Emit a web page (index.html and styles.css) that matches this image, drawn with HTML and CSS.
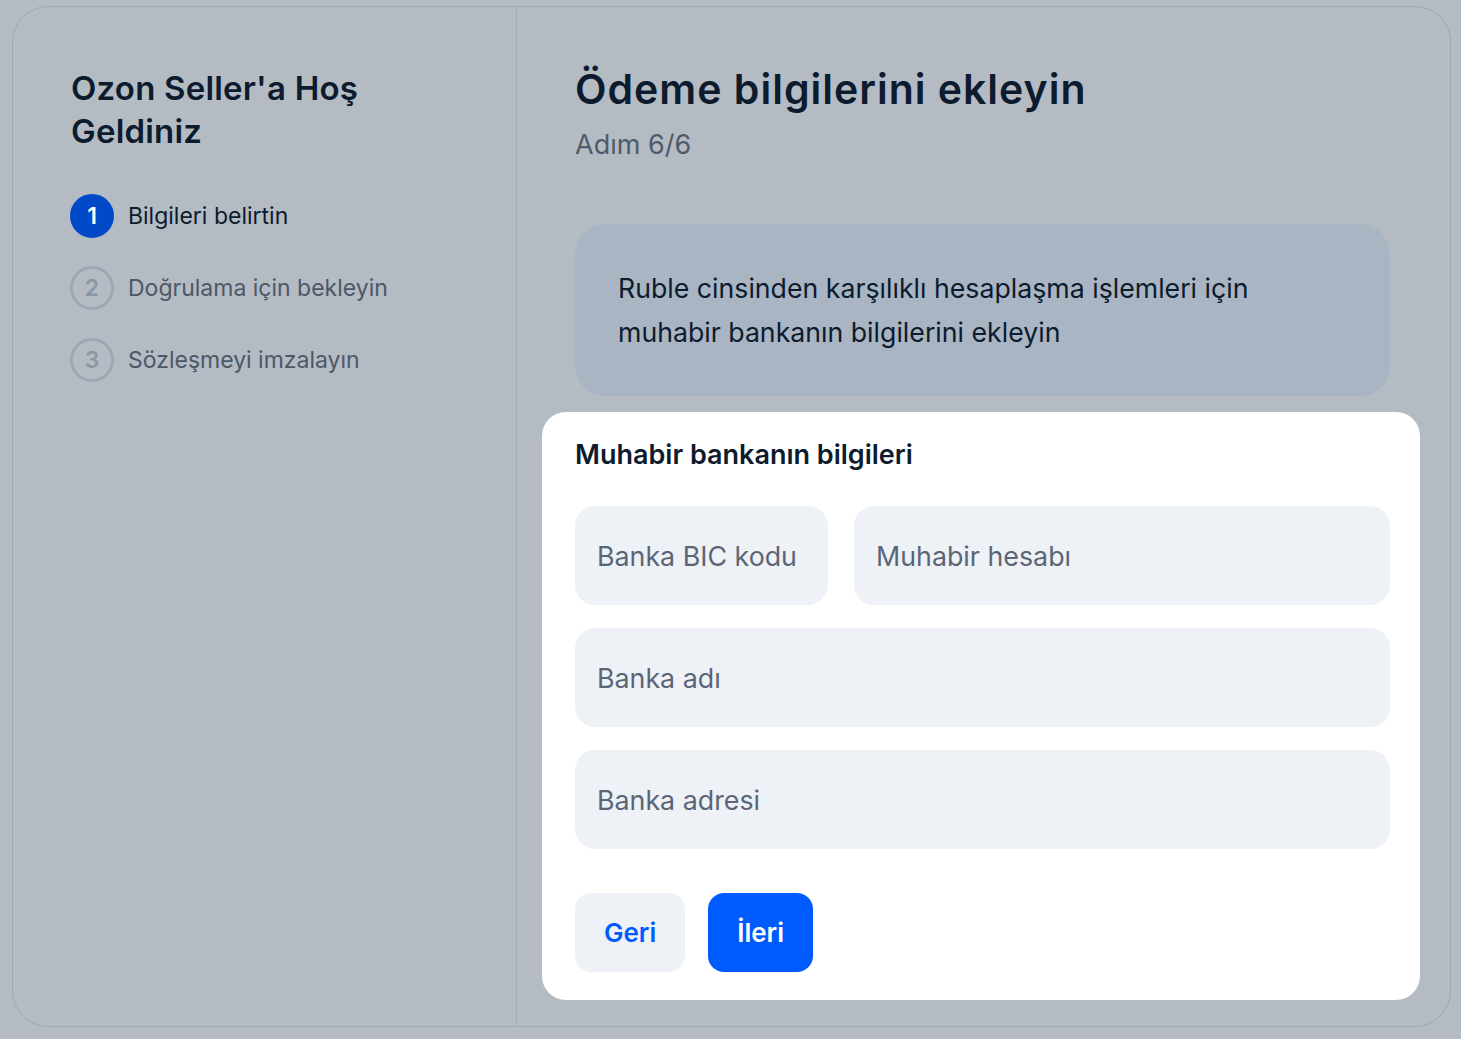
FILE: index.html
```html
<!DOCTYPE html>
<html lang="tr">
<head>
  <meta charset="UTF-8">
  <meta name="viewport" content="width=device-width, initial-scale=1.0">
  <title>Ozon Seller</title>
  <link rel="stylesheet" href="styles.css">
</head>
<body>
  <div class="layout">

    <!-- Sol menü / adımlar -->
    <aside class="sidebar">
      <h2 class="welcome">Ozon Seller'a Hoş Geldiniz</h2>
      <ul class="steps">
        <li class="step active"><span class="num">1</span>Bilgileri belirtin</li>
        <li class="step"><span class="num">2</span>Doğrulama için bekleyin</li>
        <li class="step"><span class="num">3</span>Sözleşmeyi imzalayın</li>
      </ul>
    </aside>

    <!-- Ana içerik -->
    <main class="content">
      <h1 class="title">Ödeme bilgilerini ekleyin</h1>
      <p class="subtitle">Adım 6/6</p>

      <div class="notice">
        Ruble cinsinden karşılıklı hesaplaşma işlemleri için
        muhabir bankanın bilgilerini ekleyin
      </div>

      <form class="bank-card" onsubmit="return false">
        <h3>Muhabir bankanın bilgileri</h3>
        <div class="row">
          <input class="field bic" type="text" placeholder="Banka BIC kodu">
          <input class="field" type="text" placeholder="Muhabir hesabı">
        </div>
        <input class="field" type="text" placeholder="Banka adı">
        <input class="field" type="text" placeholder="Banka adresi">
        <div class="actions">
          <button type="button" class="btn secondary">Geri</button>
          <button type="submit" class="btn primary">İleri</button>
        </div>
      </form>
    </main>

  </div>
</body>
</html>
```

FILE: styles.css
```css
* { box-sizing: border-box; }

body {
  margin: 0;
  background: #b4bbc3;
  font-family: Inter, "Noto Sans", sans-serif;
  color: #0d1b2e;
}

.layout {
  display: grid;
  grid-template-columns: 504px 1fr;
  width: 1439px;
  height: 1021px;
  margin: 6px 0 0 12px;
  border: 1px solid #9da8b4;
  border-radius: 36px;
}

/* Sol taraf */
.sidebar {
  padding: 60px 40px 0 58px;
  border-right: 1px solid #a3adb8;
}

.welcome {
  margin: 0;
  font-size: 33px;
  line-height: 43px;
  font-weight: 600;
  letter-spacing: 0.2px;
  color: #0d1b2e;
}

.steps {
  list-style: none;
  margin: 41px 0 0 -1px;
  padding: 0;
  display: flex;
  flex-direction: column;
  gap: 28px;
}

.step {
  display: flex;
  align-items: center;
  gap: 14px;
  height: 44px;
  font-size: 23px;
  color: #4c5868;
}

.step .num {
  flex: none;
  width: 44px;
  height: 44px;
  border-radius: 50%;
  border: 3px solid #9ca8b5;
  display: flex;
  align-items: center;
  justify-content: center;
  font-size: 23px;
  font-weight: 600;
  color: #8a97a6;
}

.step.active {
  color: #0d1b2e;
}

.step.active .num {
  background: #0049c9;
  border-color: #0049c9;
  color: #fff;
}

/* Sağ taraf */
.content {
  padding: 58px 60px 0 58px;
}

.title {
  margin: 0;
  font-size: 41px;
  line-height: 48px;
  font-weight: 600;
  letter-spacing: 1px;
  color: #0d1b2e;
}

.subtitle {
  margin: 16px 0 0;
  font-size: 27px;
  line-height: 32px;
  color: #4f5b6a;
}

.notice {
  margin-top: 63px;
  padding: 42px 43px;
  background: #a9b5c2;
  border-radius: 30px;
  font-size: 26.7px;
  line-height: 44px;
  color: #0d1b2e;
}

.bank-card {
  margin: 16px -30px 0 -33px;
  padding: 27px 30px 28px 33px;
  background: #fff;
  border-radius: 24px;
  display: flex;
  flex-direction: column;
  gap: 23px;
}

.bank-card h3 {
  margin: 0 0 12px;
  font-size: 27px;
  line-height: 32px;
  font-weight: 600;
  color: #0d1b2e;
}

.row {
  display: flex;
  gap: 26px;
}

.field {
  width: 100%;
  height: 99px;
  padding: 0 22px;
  border: none;
  border-radius: 20px;
  background: #eef1f6;
  font-family: inherit;
  font-size: 26.8px;
  color: #0d1b2e;
  outline: none;
}

.field::placeholder {
  color: #5a6676;
}

.field.bic {
  width: 253px;
  flex: none;
}

.actions {
  display: flex;
  gap: 23px;
  margin-top: 21px;
}

.btn {
  height: 79px;
  padding: 0 29px;
  border: none;
  border-radius: 16px;
  font-family: inherit;
  font-size: 26px;
  font-weight: 600;
  cursor: pointer;
}

.btn.secondary {
  background: #eef1f6;
  color: #005bff;
}

.btn.primary {
  background: #005bff;
  color: #fff;
}
```
